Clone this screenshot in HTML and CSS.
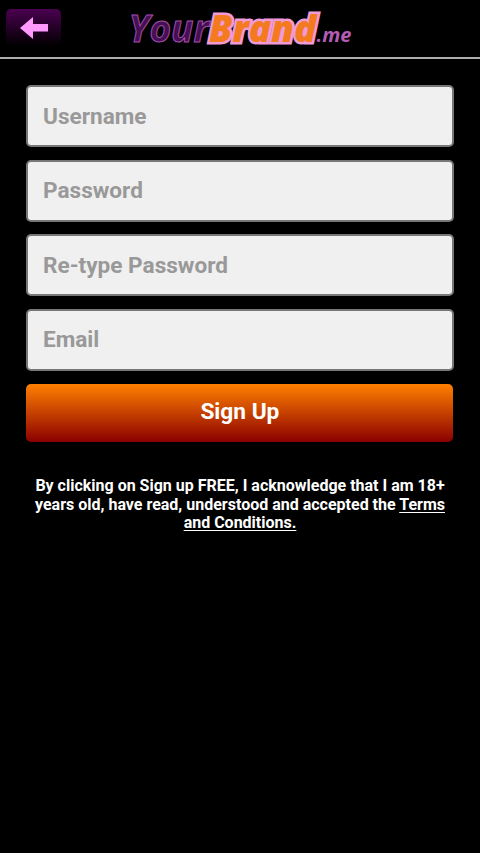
FILE: index.html
```html
<!DOCTYPE html>
<html lang="en">
<head>
<meta charset="utf-8">
<title>Sign Up</title>
<link rel="stylesheet" href="styles.css">
</head>
<body>
<header class="topbar">
  <a class="back" href="#" aria-label="Back">
    <svg width="28" height="22" viewBox="0 0 28 22"><path fill="#ff99ff" d="M0 11 13 0V7H28V14.500H13V22Z"/></svg>
  </a>
  <div class="brand"><span class="brand-first">Your</span><span class="brand-second">Brand</span><span class="brand-tld">.me</span></div>
</header>
<form class="signup">
  <input class="field" type="text" placeholder="Username">
  <input class="field" type="password" placeholder="Password">
  <input class="field" type="password" placeholder="Re-type Password">
  <input class="field" type="email" placeholder="Email">
  <button class="submit" type="button">Sign Up</button>
  <p class="terms"><span class="line">By clicking on Sign up FREE, I acknowledge that I am 18+</span> <span class="line">years old, have read, understood and accepted the <a href="#">Terms</a></span> <a href="#">and Conditions.</a></p>
</form>
</body>
</html>
```
FILE: styles.css
```css
* { box-sizing: border-box; }
body {
  margin: 0;
  min-height: 100vh;
  background: #000;
  color: #fff;
  font-family: Roboto, "Liberation Sans", sans-serif;
}
.topbar {
  display: grid;
  grid-template-columns: 55px 1fr 55px;
  height: 59px;
  padding: 9px 6px 0;
  border-bottom: 2px solid #b0adb0;
}
.back {
  display: flex;
  align-items: center;
  justify-content: center;
  height: 37px;
  border-radius: 5px;
  background: linear-gradient(#4b0050, #000);
}
.brand {
  display: flex;
  align-items: baseline;
  justify-content: center;
  height: 40px;
  font: italic 700 37px/38px "Open Sans", sans-serif;
}
.brand-first { color: #451052; -webkit-text-stroke: 1px #a34cac; }
.brand-second {
  color: #f47a20;
  font-weight: 800;
  -webkit-text-stroke: 5px #ef9bd8;
  paint-order: stroke fill;
}
.brand-tld { color: #b45bb5; font-size: 20px; }
.signup {
  display: flex;
  flex-direction: column;
  padding: 26px 26px 0;
}
.field {
  width: 428px;
  height: 62px;
  margin: 0 0 12.600px;
  padding: 0 15px;
  border: 2px solid #777;
  border-radius: 5px;
  background: #f0f0f0;
  color: #333;
  font: 700 22.600px Roboto, sans-serif;
  outline: 0;
}
.field::placeholder { color: #999; opacity: 1; }
.submit {
  width: 427px;
  height: 58px;
  margin: 0.600px 0 0 0.400px;
  padding: 0 0 2px;
  border: 0;
  border-radius: 5px;
  background: linear-gradient(#ff8000, #8b0000);
  color: #fff;
  font: 700 22.700px Roboto, sans-serif;
}
.terms {
  margin: 35px 0 0;
  text-align: center;
  font-size: 16px;
  font-weight: 700;
  line-height: 18.700px;
}
.line { display: block; white-space: nowrap; }
.terms a { color: inherit; text-underline-offset: 2px; text-decoration-thickness: 1px; text-decoration-skip-ink: none; }
```
